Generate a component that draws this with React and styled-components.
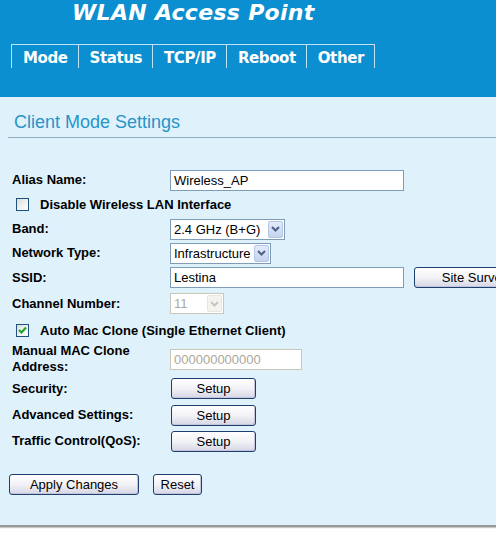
import React from 'react'
import styled, { createGlobalStyle } from 'styled-components'

const GlobalStyle = createGlobalStyle`
  html, body {
    margin: 0;
    padding: 0;
    background: #fff;
    overflow: hidden;
  }
  body {
    font-family: "Liberation Sans", Arial, sans-serif;
  }
`

const Page = styled.div`
  width: 496px;
  height: 553px;
  overflow: hidden;
`

const Header = styled.div`
  height: 97px;
  background: #0b8fd0;
`

const Brand = styled.div`
  padding: 0 0 0 72px;
  height: 30px;
  line-height: 26px;
  font-family: "DejaVu Sans", sans-serif;
  font-weight: bold;
  font-style: italic;
  font-size: 22px;
  color: #fff;
  letter-spacing: 0.3px;
`

const Tabs = styled.div`
  display: flex;
  margin: 14px 0 0 11px;
`

const Tab = styled.div`
  border-top: 1px solid #bfe2f4;
  border-left: 1px solid #bfe2f4;
  border-right: ${p => (p.$last ? '1px solid #bfe2f4' : 'none')};
  height: 19px;
  padding: 4px 10px 0 11px;
  font-family: "DejaVu Sans", sans-serif;
  font-weight: bold;
  font-size: 15px;
  letter-spacing: -0.4px;
  color: #fff;
  line-height: 18px;
`

const Content = styled.div`
  background: #dff2fc;
  height: 416px;
  border-bottom: 2px solid #9a9a9a;
  box-shadow: 0 1px 1px #c8c8c8;
  padding-top: 12px;
`

const Title = styled.div`
  margin-left: 14px;
  font-size: 18px;
  color: #2794c9;
  line-height: 26px;
  height: 28px;
`

const Rule = styled.div`
  margin-left: 8px;
  border-top: 1px solid #8ea9ba;
`

const Form = styled.div`
  display: flex;
  flex-direction: column;
  padding: 30px 0 0 12px;
`

const Row = styled.div`
  display: flex;
  align-items: center;
  height: ${p => p.$h || 24}px;
`

const Label = styled.div`
  width: 158px;
  flex: none;
  font-weight: bold;
  font-size: 13px;
  line-height: 16px;
  color: #000;
  padding-right: 20px;
  box-sizing: border-box;
`

const CheckLine = styled.label`
  display: flex;
  align-items: center;
  padding-left: 4px;
  font-weight: bold;
  font-size: 13px;
  color: #000;
`

const Box = styled.span`
  width: 11px;
  height: 11px;
  border: 1px solid #1c5180;
  background: linear-gradient(135deg, #dcdcd6 0%, #f4f4f2 60%, #fff 100%);
  margin-right: 11px;
  display: flex;
  align-items: center;
  justify-content: center;
`

const TextInput = styled.div`
  flex: none;
  width: ${p => p.$w}px;
  height: 19px;
  border: 1px solid ${p => (p.$disabled ? '#c9c7ba' : '#7f9db9')};
  background: #fff;
  font-size: 13px;
  line-height: 19px;
  padding-left: 3px;
  color: ${p => (p.$disabled ? '#aca899' : '#000')};
`

const Select = styled.div`
  flex: none;
  display: flex;
  width: ${p => p.$w}px;
  height: 19px;
  border: 1px solid ${p => (p.$disabled ? '#c9c7ba' : '#7f9db9')};
  background: #fff;
`

const SelectValue = styled.div`
  flex: 1;
  font-size: 13px;
  line-height: 19px;
  padding-left: 3px;
  color: ${p => (p.$disabled ? '#aca899' : '#000')};
  white-space: nowrap;
  overflow: hidden;
`

const Arrow = styled.div`
  width: 15px;
  margin: 1px;
  border: 1px solid ${p => (p.$disabled ? '#e8e6dc' : '#b5c7e6')};
  border-radius: 2px;
  background: ${p => (p.$disabled ? '#f4f3ee' : 'linear-gradient(#e4ecfb, #c4d3f0)')};
  box-sizing: border-box;
  display: flex;
  align-items: center;
  justify-content: center;
`

const Button = styled.button`
  width: ${p => p.$w}px;
  height: 21px;
  padding: 0;
  margin: 0;
  border: 1px solid #1f3f70;
  border-radius: 3px;
  background: linear-gradient(#ffffff 0%, #f2f2f6 50%, #d6d6e6 100%);
  box-shadow: inset -1px -1px 0 #c4c4da;
  font-family: "Liberation Sans", Arial, sans-serif;
  font-size: 13px;
  color: #000;
  flex: none;
  white-space: nowrap;
`

const Spacer = styled.div`
  width: ${p => p.$w}px;
  flex: none;
`

const Actions = styled.div`
  display: flex;
  gap: 14px;
  padding: 20px 0 0 9px;
`

function Chevron({ disabled }) {
  return (
    <svg width="9" height="6" viewBox="0 0 9 6">
      <path d="M1 1 L4.5 4.5 L8 1" fill="none" stroke={disabled ? '#c9c7ba' : '#4d6185'} strokeWidth="2" />
    </svg>
  )
}

function Check() {
  return (
    <svg width="9" height="9" viewBox="0 0 9 9">
      <path d="M1 4 L3.5 6.5 L8 1.5" fill="none" stroke="#21a121" strokeWidth="2" />
    </svg>
  )
}

function FakeSelect({ w, value, disabled }) {
  return (
    <Select $w={w} $disabled={disabled}>
      <SelectValue $disabled={disabled}>{value}</SelectValue>
      <Arrow $disabled={disabled}>
        <Chevron disabled={disabled} />
      </Arrow>
    </Select>
  )
}

const tabs = ['Mode', 'Status', 'TCP/IP', 'Reboot', 'Other']

export default function App() {
  return (
    <Page>
      <GlobalStyle />
      <Header>
        <Brand>WLAN Access Point</Brand>
        <Tabs>
          {tabs.map((t, i) => (
            <Tab key={t} $last={i === tabs.length - 1}>{t}</Tab>
          ))}
        </Tabs>
      </Header>
      <Content>
        <Title>Client Mode Settings</Title>
        <Rule />
        <Form>
          <Row $h={24}>
            <Label>Alias Name:</Label>
            <TextInput $w={229}>Wireless_AP</TextInput>
          </Row>
          <Row $h={25}>
            <CheckLine>
              <Box />
              Disable Wireless LAN Interface
            </CheckLine>
          </Row>
          <Row $h={24}>
            <Label>Band:</Label>
            <FakeSelect w={113} value="2.4 GHz (B+G)" />
          </Row>
          <Row $h={24}>
            <Label>Network Type:</Label>
            <FakeSelect w={99} value="Infrastructure" />
          </Row>
          <Row $h={25}>
            <Label>SSID:</Label>
            <TextInput $w={229}>Lestina</TextInput>
            <Spacer $w={10} />
            <Button $w={122}>Site Survey</Button>
          </Row>
          <Row $h={27}>
            <Label>Channel Number:</Label>
            <FakeSelect w={52} value="11" disabled />
          </Row>
          <Row $h={26}>
            <CheckLine>
              <Box>
                <Check />
              </Box>
              Auto Mac Clone (Single Ethernet Client)
            </CheckLine>
          </Row>
          <Row $h={32}>
            <Label>Manual MAC Clone Address:</Label>
            <TextInput $w={127} $disabled>000000000000</TextInput>
          </Row>
          <Row $h={27}>
            <Label>Security:</Label>
            <Spacer $w={1} />
            <Button $w={85}>Setup</Button>
          </Row>
          <Row $h={26}>
            <Label>Advanced Settings:</Label>
            <Spacer $w={1} />
            <Button $w={85}>Setup</Button>
          </Row>
          <Row $h={26}>
            <Label>Traffic Control(QoS):</Label>
            <Spacer $w={1} />
            <Button $w={85}>Setup</Button>
          </Row>
        </Form>
        <Actions>
          <Button $w={130}>Apply Changes</Button>
          <Button $w={49}>Reset</Button>
        </Actions>
      </Content>
    </Page>
  )
}
